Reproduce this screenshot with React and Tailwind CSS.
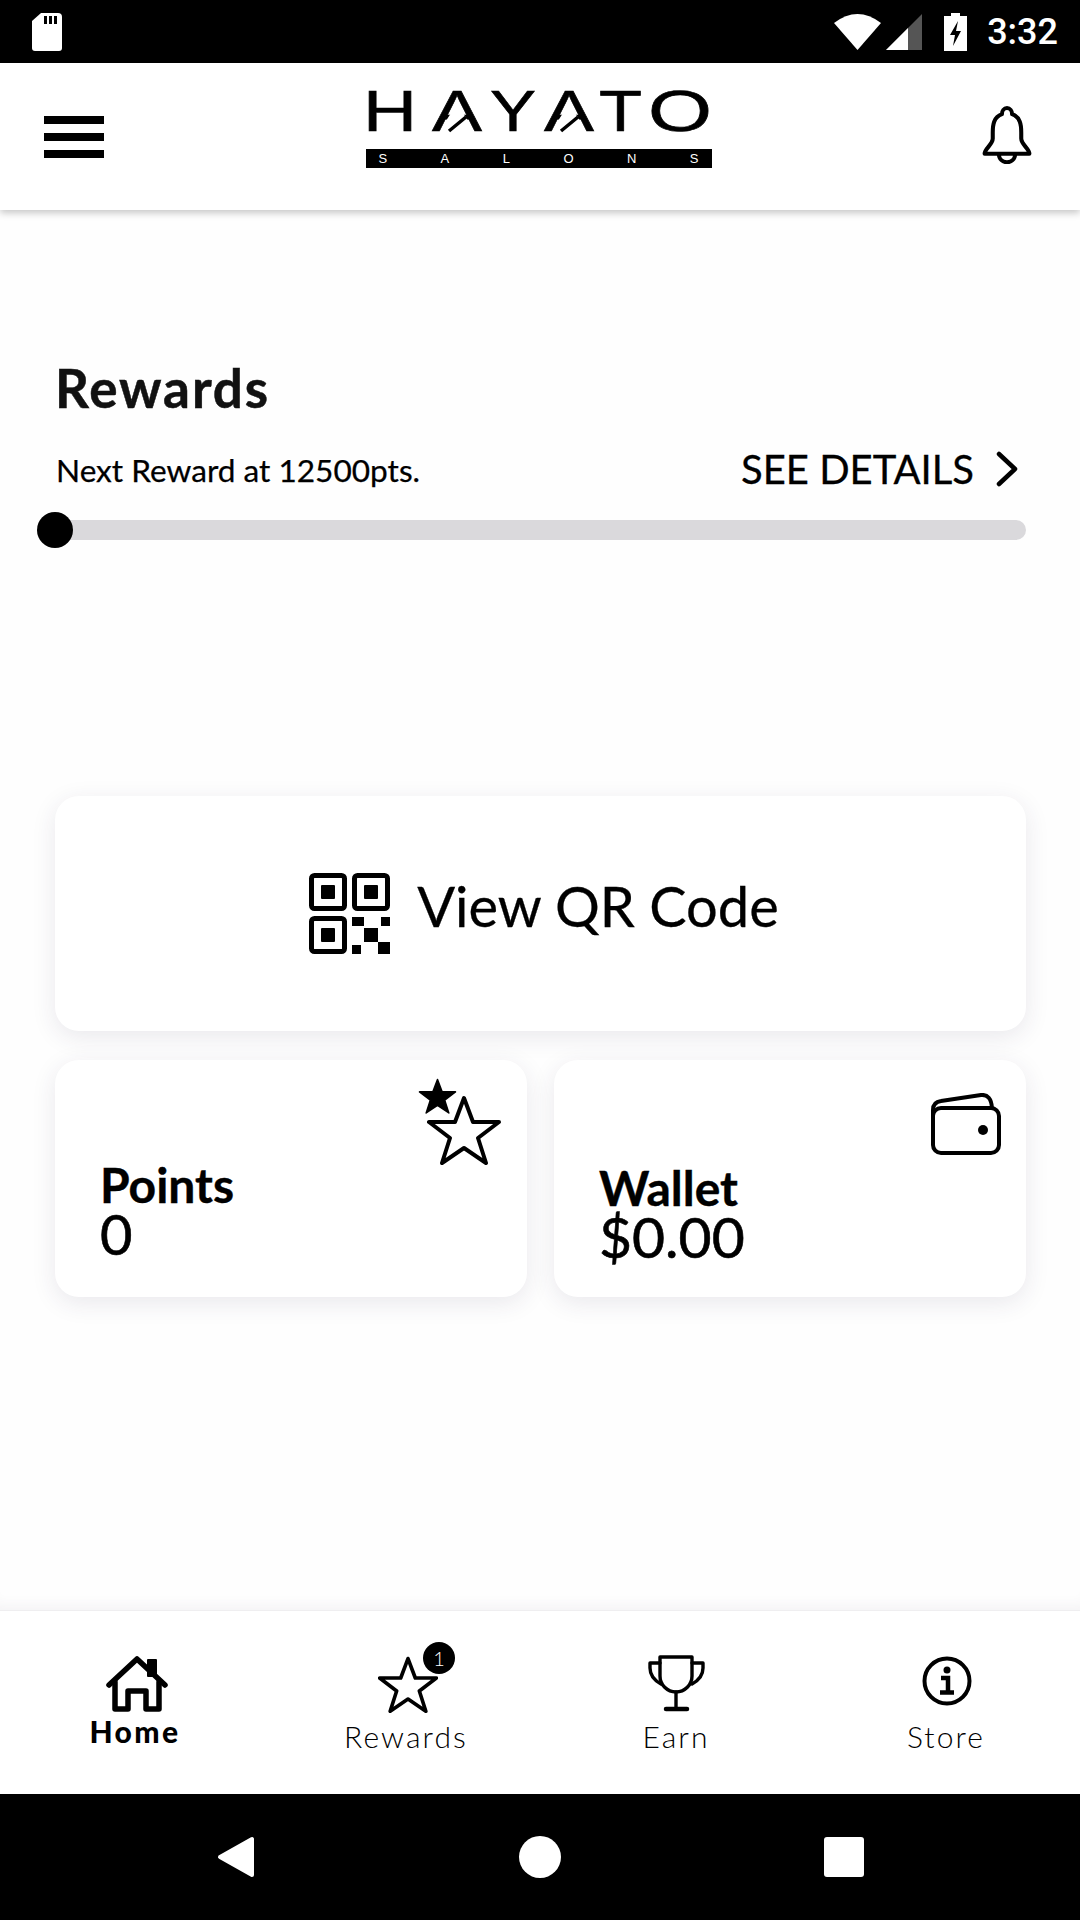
const STAR = "M37 3 L46 27 L72 27 L51 43 L59 68 L37 53 L15 68 L23 43 L2 27 L28 27 Z";
const sans = "font-['Lato','Noto_Sans',sans-serif]";

function StatusBar() {
  return (
    <div className="h-[63px] shrink-0 bg-black flex items-center relative">
      <svg className="ml-[32px]" width="30" height="38" viewBox="0 0 30 38">
        <path d="M9 0 H26 a4 4 0 0 1 4 4 V35 a3 3 0 0 1 -3 3 H3 a3 3 0 0 1 -3 -3 V8 Z" fill="#fff" />
        <path d="M12 3 h3 v8 h-3 z M17 3 h3 v8 h-3 z M22 3 h3 v8 h-3 z" fill="#000" />
      </svg>
      <div className="ml-auto flex items-center mr-[22px]">
        <svg width="47" height="36" viewBox="0 0 47 36">
          <path d="M0 9 Q23.5 -9 47 9 L23.5 36 Z" fill="#fff" />
        </svg>
        <svg className="ml-[5px]" width="36" height="36" viewBox="0 0 36 36">
          <path d="M0 36 L36 0 V36 Z" fill="#555" />
          <path d="M0 36 L22 14 V36 Z" fill="#fff" />
        </svg>
        <svg className="ml-[22px]" width="23" height="38" viewBox="0 0 23 38">
          <path d="M7 0 H16 V3 H23 V38 H0 V3 H7 Z" fill="#fff" />
          <path d="M14 8 L6 22 H11 L9 33 L17 18 H12 Z" fill="#000" />
        </svg>
        <span className="ml-[20px] text-white text-[36px] leading-none font-['Roboto',sans-serif] font-medium">3:32</span>
      </div>
    </div>
  );
}

function Logo() {
  return (
    <div className="w-[346px] flex flex-col">
      <svg width="346" height="42" viewBox="0 0 346 42" className="block overflow-visible">
        <text y="40" fontFamily="Liberation Sans, sans-serif" fontSize="57" fill="#000" stroke="#000" strokeWidth="0.6">
          <tspan x="-3" textLength="54" lengthAdjust="spacingAndGlyphs">H</tspan>
          <tspan x="66" textLength="50" lengthAdjust="spacingAndGlyphs">A</tspan>
          <tspan x="124" textLength="46" lengthAdjust="spacingAndGlyphs">Y</tspan>
          <tspan x="178" textLength="50" lengthAdjust="spacingAndGlyphs">A</tspan>
          <tspan x="233" textLength="43" lengthAdjust="spacingAndGlyphs">T</tspan>
          <tspan x="282" textLength="64" lengthAdjust="spacingAndGlyphs">O</tspan>
        </text>
        <path d="M85 22 H97 L104 33 H78 Z M197 22 H209 L216 33 H190 Z" fill="#fff" />
        <path d="M83 40 L100 26 M195 40 L212 26" stroke="#000" strokeWidth="3.5" />
      </svg>
      <div className="mt-[16px] h-[19px] bg-black flex items-center justify-between px-[13px] text-white text-[13px] leading-none font-['Liberation_Sans',sans-serif]">
        <span>S</span><span>A</span><span>L</span><span>O</span><span>N</span><span>S</span>
      </div>
    </div>
  );
}

function Header() {
  return (
    <div className="h-[147px] shrink-0 bg-white flex items-center justify-between shadow-[0_3px_7px_rgba(0,0,0,0.22)] relative z-10 pl-[44px] pr-[47px]">
      <div className="flex flex-col gap-[9px] w-[60px]">
        <div className="h-[8px] bg-black" />
        <div className="h-[8px] bg-black" />
        <div className="h-[8px] bg-black" />
      </div>
      <div className="mt-[-14px] ml-[-8px]"><Logo /></div>
      <svg className="mt-[-4px]" width="52" height="58" viewBox="0 0 50 57" fill="none" stroke="#000" strokeWidth="4" strokeLinejoin="round">
        <path d="M25 2 C28 2 30 5 30 8 C38 11 39 18 39 26 V32 C39 38 47 42 47 47 H3 C3 42 11 38 11 32 V26 C11 18 12 11 20 8 C20 5 22 2 25 2 Z" />
        <path d="M17 47 C17 58 33 58 33 47" />
      </svg>
    </div>
  );
}

function Finder({ x, y }) {
  return (
    <g>
      <rect x={x + 2.5} y={y + 2.5} width="33" height="33" rx="3" fill="none" stroke="#000" strokeWidth="5" />
      <rect x={x + 12} y={y + 12} width="14" height="14" rx="1" fill="#000" />
    </g>
  );
}

function QrIcon() {
  return (
    <svg width="81" height="81" viewBox="0 0 81 81">
      <Finder x={0} y={0} />
      <Finder x={43} y={0} />
      <Finder x={0} y={43} />
      <path d="M43 44 h12 v9 h-12 z M72 44 h9 v9 h-9 z M55 55 h14 v14 h-14 z M43 72 h9 v9 h-9 z M69 69 h12 v12 h-12 z" fill="#000" />
    </svg>
  );
}

function StatCard({ title, value, titleTop, valueGap, valueSize, children, left }) {
  return (
    <div className="flex-1 h-[237px] bg-white rounded-[24px] shadow-[0_6px_24px_rgba(50,40,80,0.1)] relative">
      <div className={`${left} ${titleTop} text-black ${sans}`}>
        <div className="text-[48px] leading-[46px] font-bold [-webkit-text-stroke:0.4px_#000]">{title}</div>
        <div className={`${valueSize} leading-[54px] [-webkit-text-stroke:0.6px_#000] ${valueGap}`}>{value}</div>
      </div>
      {children}
    </div>
  );
}

function Main() {
  return (
    <div className="flex-1 bg-[#fefefe] pl-[55px] pr-[54px] shadow-[inset_0_-14px_14px_-10px_rgba(60,50,90,0.06)]">
      <h1 className={`mt-[148px] text-[53px] leading-[60px] tracking-[1.9px] font-bold text-[#111] [-webkit-text-stroke:0.5px_#111] ${sans}`}>Rewards</h1>
      <div className={`mt-[26px] flex justify-between items-start text-black ${sans}`}>
        <span className="ml-px mt-[6px] text-[31.6px] leading-[40px] [-webkit-text-stroke:0.25px_#000]">Next Reward at 12500pts.</span>
        <span className="flex items-center mt-[2px] text-[40px] leading-[46px] mr-[8px] [-webkit-text-stroke:0.3px_#000]">
          SEE DETAILS
          <svg className="ml-[22px]" width="22" height="36" viewBox="0 0 22 36" fill="none" stroke="#000" strokeWidth="4.5" strokeLinecap="round" strokeLinejoin="round">
            <path d="M3 3 L19 18 L3 33" />
          </svg>
        </span>
      </div>
      <div className="mt-[28px] h-[20px] rounded-full bg-[#dad9dc] relative">
        <div className="absolute left-[-18px] top-[-8px] w-[36px] h-[36px] rounded-full bg-black" />
      </div>
      <div className="mt-[256px] h-[235px] bg-white rounded-[24px] shadow-[0_6px_24px_rgba(50,40,80,0.1)] flex items-center justify-center">
        <div className="flex items-center gap-[27px] ml-[7px]">
          <QrIcon />
          <span className={`mt-[-15px] text-[56px] leading-[64px] text-black [-webkit-text-stroke:0.3px_#000] ${sans}`}>View QR Code</span>
        </div>
      </div>
      <div className="mt-[29px] flex gap-[27px]">
        <StatCard title="Points" value="0" valueSize="text-[56px]" left="ml-[45px]" titleTop="pt-[102px]" valueGap="mt-[-1px]">
          <svg className="absolute left-[363px] top-[18px]" width="39" height="36" viewBox="0 0 74 70">
            <path d={STAR} fill="#000" stroke="#000" strokeWidth="3" strokeLinejoin="round" />
          </svg>
          <svg className="absolute left-[372px] top-[35px]" width="74" height="70" viewBox="0 0 74 70">
            <path d={STAR} fill="none" stroke="#000" strokeWidth="4" strokeLinejoin="round" />
          </svg>
        </StatCard>
        <StatCard title="Wallet" value="$0.00" valueSize="text-[57px]" left="ml-[45px]" titleTop="pt-[105px]" valueGap="mt-[-2px]">
          <svg className="absolute left-[377px] top-[33px]" width="70" height="62" viewBox="0 0 70 62" fill="none" stroke="#000" strokeWidth="4">
            <rect x="2" y="15" width="66" height="45" rx="8" />
            <path d="M2 23 V17 Q2 9 10 8 L50 2 Q60 1 61 15" />
            <circle cx="52" cy="37" r="5" fill="#000" stroke="none" />
          </svg>
        </StatCard>
      </div>
    </div>
  );
}

function Tab({ label, active, iconClass, children }) {
  return (
    <div className="flex-1 flex flex-col items-center relative">
      <div className={`h-[62px] mt-[42px] flex items-center justify-center relative ${iconClass}`}>{children}</div>
      <span className={active ? `mt-[-2px] text-[30px] leading-[36px] font-black tracking-[2.4px] text-black ${sans}` : `mt-[3px] ml-[2px] text-[30px] leading-[36px] tracking-[2.1px] font-light text-black ${sans}`}>{label}</span>
    </div>
  );
}

function BottomNav() {
  return (
    <div className="h-[184px] shrink-0 bg-white flex border-t border-[#efeef0]">
      <Tab label="Home" active iconClass="ml-[3px]">
        <svg width="66" height="60" viewBox="0 0 66 60" fill="none" stroke="#000" strokeWidth="5.5" strokeLinecap="round" strokeLinejoin="round">
          <path d="M5 31 L33 5 L61 31" />
          <path d="M11 28 V55 H24 V37 H42 V55 H55 V28" />
          <rect x="44" y="6" width="8" height="16" fill="#000" strokeWidth="2" />
        </svg>
      </Tab>
      <Tab label="Rewards" iconClass="ml-[6px]">
        <svg width="60" height="57" viewBox="0 0 74 70" fill="none" stroke="#000" strokeWidth="4.5" strokeLinejoin="round">
          <path d={STAR} />
        </svg>
        <div className="absolute left-[45px] top-[-11px] w-[32px] h-[32px] rounded-full bg-black text-white text-[20px] leading-[32px] text-center font-light font-['Lato',sans-serif]">1</div>
      </Tab>
      <Tab label="Earn" iconClass="ml-[4px]">
        <svg width="60" height="60" viewBox="0 0 60 60" fill="none" stroke="#000" strokeWidth="3.4" strokeLinecap="round" strokeLinejoin="round">
          <path d="M13 3 H45 V22 A16 16 0 0 1 13 22 Z" />
          <path d="M13 9 H3 V14 Q3 24 14 30 M45 9 H56 V14 Q56 24 45 30" />
          <path d="M29 38 V54" />
          <path d="M19 55 H40" strokeWidth="4.5" />
        </svg>
      </Tab>
      <Tab label="Store" iconClass="ml-[4px]">
        <svg className="mt-[-7px]" width="50" height="50" viewBox="0 0 50 50" fill="none" stroke="#000" strokeWidth="4">
          <circle cx="25" cy="25" r="22.5" />
          <circle cx="25" cy="14" r="3.5" fill="#000" stroke="none" />
          <path d="M19 22 H26 V36 M18 36.5 H32" strokeWidth="4.5" />
        </svg>
      </Tab>
    </div>
  );
}

function SystemNav() {
  return (
    <div className="h-[126px] shrink-0 bg-black flex items-center justify-center gap-[263px]">
      <svg width="38" height="42" viewBox="0 0 38 42" className="mr-[-1px]">
        <path d="M3 21 L35 3 V39 Z" fill="#fff" stroke="#fff" strokeWidth="4" strokeLinejoin="round" />
      </svg>
      <div className="w-[42px] h-[42px] rounded-full bg-white ml-[2px]" />
      <div className="w-[40px] h-[40px] rounded-[3px] bg-white" />
    </div>
  );
}

export default function App() {
  return (
    <div className="w-[1080px] h-[1920px] flex flex-col overflow-hidden bg-white">
      <StatusBar />
      <Header />
      <Main />
      <BottomNav />
      <SystemNav />
    </div>
  );
}
